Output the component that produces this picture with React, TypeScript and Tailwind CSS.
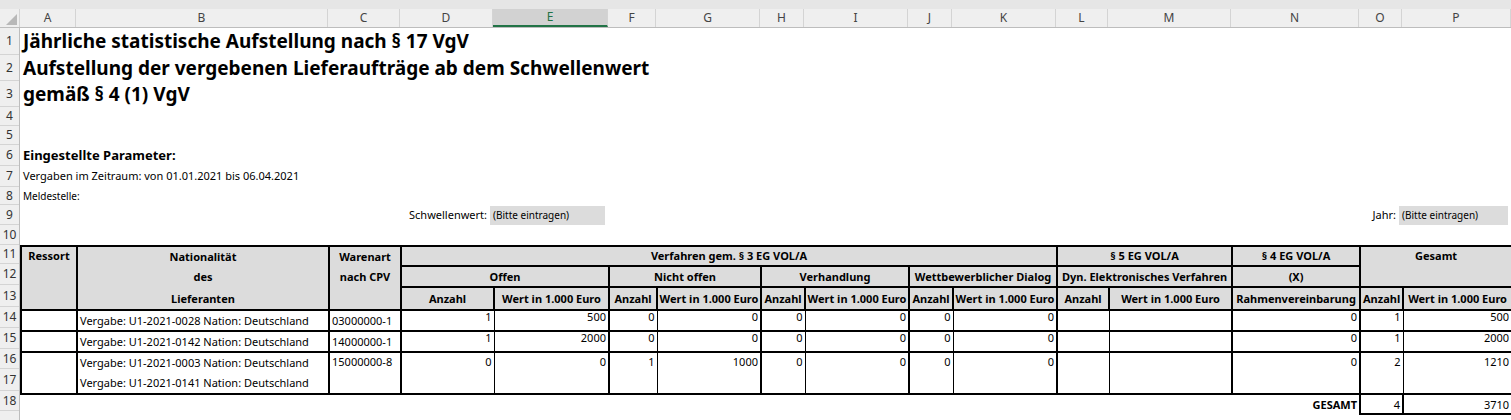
const cols = ['A', 'B', 'C', 'D', 'E', 'F', 'G', 'H', 'I', 'J', 'K', 'L', 'M', 'N', 'O', 'P']
const widths = [56, 252, 72, 93, 115, 48, 104, 44, 104, 44, 104, 52, 123, 128, 43, 109]
const rowHeights = [27, 26, 26, 19, 19, 21, 21, 18, 20, 20, 19, 21, 22, 21, 21, 20, 22, 20, 20]

const T = 'border-2 border-black'
const H = 'bg-[#dcdcdc] font-bold text-center align-middle ' + T
const num = 'text-right align-top pr-[2px] border-black border-y-2'

function DataRow({ vals, h }: { vals: (string | number)[]; h: number }) {
  // vals: D..P (13 values), '' for empty
  return null as unknown as JSX.Element
}

export default function App() {
  const rows = [
    { id: 'U1-2021-0028', cpv: '03000000-1', v: [1, 500, 0, 0, 0, 0, 0, 0, '', '', 0, 1, 500] },
    { id: 'U1-2021-0142', cpv: '14000000-1', v: [1, 2000, 0, 0, 0, 0, 0, 0, '', '', 0, 1, 2000] },
  ]
  const third = [0, 0, 1, 1000, 0, 0, 0, 0, '', '', 0, 2, 1210]
  const borderFor = (i: number) =>
    i % 2 === 0 ? 'border-l-2 border-r' : 'border-r-2'
  return (
    <div className="w-[1511px] h-[420px] overflow-hidden bg-white text-black font-['Liberation_Sans',Arial,sans-serif] text-[11px]">
      <div className="h-[9px] bg-[#e6e6e6]" />
      <div className="flex h-[19px] bg-[#efefef] border-b border-[#bdbdbd] text-[12px] text-[#444]">
        <div className="w-[20px] relative border-r border-[#d4d4d4]">
          <div className="absolute right-[2px] bottom-[2px] w-0 h-0 border-l-[11px] border-l-transparent border-b-[11px] border-b-[#b8b8b8]" />
        </div>
        {cols.map((c, i) => (
          <div
            key={c}
            style={{ width: widths[i] }}
            className={
              'flex items-center justify-center border-r border-[#d4d4d4] ' +
              (c === 'E' ? 'bg-[#d2d2d2] text-[#217346] border-b-2 border-b-[#217346]' : '')
            }
          >
            {c}
          </div>
        ))}
      </div>
      <div className="flex">
        <div className="w-[20px] shrink-0 bg-[#efefef] border-r border-[#bdbdbd] text-[12px] text-[#333]">
          {rowHeights.map((h, i) => (
            <div key={i} style={{ height: h }} className="flex items-center justify-center border-b border-[#d4d4d4]">
              {i < 18 ? i + 1 : ''}
            </div>
          ))}
        </div>
        <div className="flex-1 pl-[3px]">
          <div className="h-[27px] flex items-center text-[19px] font-bold whitespace-nowrap">Jährliche statistische Aufstellung nach § 17 VgV</div>
          <div className="h-[26px] flex items-center text-[19px] font-bold whitespace-nowrap">Aufstellung der vergebenen Lieferaufträge ab dem Schwellenwert</div>
          <div className="h-[26px] flex items-center text-[19px] font-bold whitespace-nowrap">gemäß § 4 (1) VgV</div>
          <div className="h-[38px]" />
          <div className="h-[21px] flex items-center text-[13px] font-bold">Eingestellte Parameter:</div>
          <div className="h-[21px] flex items-center">Vergaben im Zeitraum: von 01.01.2021 bis 06.04.2021</div>
          <div className="h-[18px] flex items-center text-[10px]">Meldestelle:</div>
          <div className="h-[20px] flex items-center -ml-[3px]">
            <div className="w-[470px] text-right pr-[3px]">Schwellenwert:</div>
            <div className="w-[115px] h-[19px] bg-[#dcdcdc] flex items-center pl-[3px] text-[10px]">(Bitte eintragen)</div>
            <div className="w-[794px] text-right pr-[3px]">Jahr:</div>
            <div className="w-[109px] h-[19px] bg-[#dcdcdc] flex items-center pl-[3px] text-[10px]">(Bitte eintragen)</div>
          </div>
          <div className="h-[20px]" />
          <table className="-ml-[3px] table-fixed border-collapse w-[1491px] leading-none">
            <colgroup>
              {widths.map((w, i) => (
                <col key={i} style={{ width: w }} />
              ))}
            </colgroup>
            <tbody>
              <tr className="h-[19px]">
                <td rowSpan={3} className={H + ' !align-top pt-[3px]'}>Ressort</td>
                <td rowSpan={3} className={H + ' !align-top'}>
                  <div className="h-[19px] flex items-center justify-center">Nationalität</div>
                  <div className="h-[21px] flex items-center justify-center">des</div>
                  <div className="h-[22px] flex items-center justify-center">Lieferanten</div>
                </td>
                <td rowSpan={3} className={H + ' !align-top'}>
                  <div className="h-[19px] flex items-center justify-center">Warenart</div>
                  <div className="h-[21px] flex items-center justify-center">nach CPV</div>
                </td>
                <td colSpan={8} className={H}>Verfahren gem. § 3 EG VOL/A</td>
                <td colSpan={2} className={H}>§ 5 EG VOL/A</td>
                <td className={H}>§ 4 EG VOL/A</td>
                <td colSpan={2} rowSpan={2} className={H + ' !align-top pt-[3px]'}>Gesamt</td>
              </tr>
              <tr className="h-[21px]">
                <td colSpan={2} className={H}>Offen</td>
                <td colSpan={2} className={H}>Nicht offen</td>
                <td colSpan={2} className={H}>Verhandlung</td>
                <td colSpan={2} className={H}>Wettbewerblicher Dialog</td>
                <td colSpan={2} className={H}>Dyn. Elektronisches Verfahren</td>
                <td className={H}>(X)</td>
              </tr>
              <tr className="h-[22px]">
                {['Anzahl', 'Wert in 1.000 Euro', 'Anzahl', 'Wert in 1.000 Euro', 'Anzahl', 'Wert in 1.000 Euro', 'Anzahl', 'Wert in 1.000 Euro', 'Anzahl', 'Wert in 1.000 Euro', 'Rahmenvereinbarung', 'Anzahl', 'Wert in 1.000 Euro'].map((t, i) => (
                  <td key={i} className={H + ' whitespace-nowrap'}>{t}</td>
                ))}
              </tr>
              {rows.map(r => (
                <tr key={r.id} className="h-[21px]">
                  <td className={T} />
                  <td className={T + ' pl-[2px] whitespace-nowrap'}>Vergabe: {r.id} Nation: Deutschland</td>
                  <td className={T + ' pl-[2px]'}>{r.cpv}</td>
                  {r.v.map((x, i) => (
                    <td key={i} className={num + ' ' + (i === 10 ? 'border-x-2' : borderFor(i > 10 ? i - 1 : i)) + ' align-middle'}>{x}</td>
                  ))}
                </tr>
              ))}
              <tr className="h-[20px]">
                <td rowSpan={2} className={T} />
                <td className="border-2 border-b-0 border-black pl-[2px] whitespace-nowrap">Vergabe: U1-2021-0003 Nation: Deutschland</td>
                <td rowSpan={2} className={T + ' pl-[2px] align-top pt-[3px]'}>15000000-8</td>
                {third.map((x, i) => (
                  <td key={i} rowSpan={2} className={num + ' ' + (i === 10 ? 'border-x-2' : borderFor(i > 10 ? i - 1 : i)) + ' pt-[3px]'}>{x}</td>
                ))}
              </tr>
              <tr className="h-[22px]">
                <td className="border-2 border-t-0 border-black pl-[2px] whitespace-nowrap">Vergabe: U1-2021-0141 Nation: Deutschland</td>
              </tr>
              <tr className="h-[20px]">
                <td colSpan={13} />
                <td className="text-right font-bold pr-[2px]">GESAMT</td>
                <td className={T + ' text-right pr-[2px]'}>4</td>
                <td className={T + ' text-right pr-[2px]'}>3710</td>
              </tr>
            </tbody>
          </table>
        </div>
      </div>
    </div>
  )
}
